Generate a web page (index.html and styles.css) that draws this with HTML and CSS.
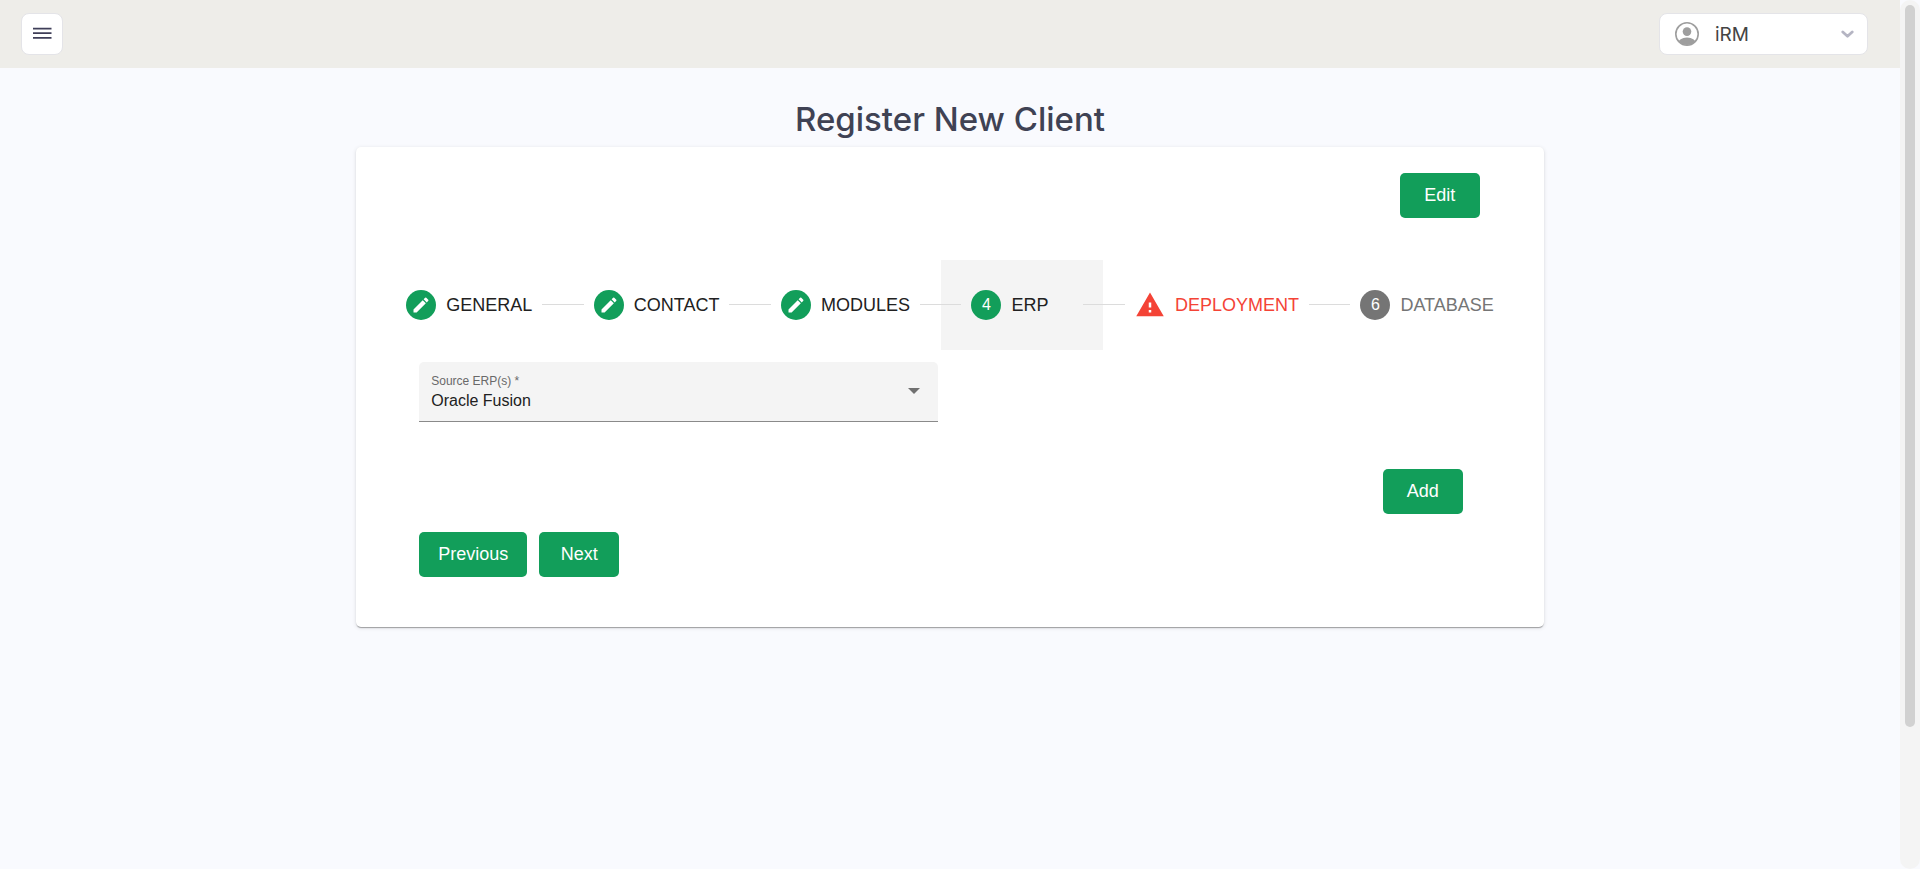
FILE: index.html
```html
<!DOCTYPE html>
<html lang="en">
<head>
<meta charset="utf-8">
<meta name="viewport" content="width=device-width, initial-scale=1">
<title>Register New Client</title>
<link rel="stylesheet" href="styles.css">
</head>
<body>
<div class="page">
  <header class="topbar">
    <button class="menu-btn" type="button" aria-label="Menu">
      <svg width="19" height="14" viewBox="0 0 19 14" fill="none" stroke="#3f3e58" stroke-width="1.7"><path d="M0 1.6h18.5M0 6.2h18.5M0 10.9h18.5"/></svg>
    </button>
    <button class="user-btn" type="button">
      <svg width="24" height="24" viewBox="0 0 24 24"><defs><clipPath id="face"><circle cx="12" cy="12" r="11"/></clipPath></defs><circle cx="12" cy="12" r="11.2" fill="none" stroke="#9e9e9e" stroke-width="1.6"/><circle cx="12" cy="9.6" r="4.3" fill="#9e9e9e"/><ellipse cx="12" cy="22" rx="9.5" ry="6.4" fill="#9e9e9e" clip-path="url(#face)"/></svg>
      <span class="user-name">iRM</span>
      <svg width="13" height="8" viewBox="0 0 13 8" fill="none" stroke="#b5b5c3" stroke-width="2.8" stroke-linecap="round" stroke-linejoin="round"><path d="M1.8 2L6.5 6.2L11.2 2"/></svg>
    </button>
  </header>
  <main class="main">
    <h1 class="title">Register New Client</h1>
    <section class="card">
      <div class="card-actions"><button class="btn" type="button">Edit</button></div>
      <nav class="stepper" aria-label="Steps">
        <button class="step" type="button"><span class="dot"><svg width="20" height="20" viewBox="0 0 24 24" fill="#fff"><path d="M3 17.25V21h3.75L17.81 9.94l-3.75-3.75L3 17.25zM20.71 7.04a1 1 0 0 0 0-1.41l-2.34-2.34a1 1 0 0 0-1.41 0l-1.83 1.83 3.75 3.75 1.83-1.83z"/></svg></span><span class="step-label">GENERAL</span></button>
        <span class="line"></span>
        <button class="step" type="button"><span class="dot"><svg width="20" height="20" viewBox="0 0 24 24" fill="#fff"><path d="M3 17.25V21h3.75L17.81 9.94l-3.75-3.75L3 17.25zM20.71 7.04a1 1 0 0 0 0-1.41l-2.34-2.34a1 1 0 0 0-1.41 0l-1.83 1.83 3.75 3.75 1.83-1.83z"/></svg></span><span class="step-label">CONTACT</span></button>
        <span class="line"></span>
        <button class="step" type="button"><span class="dot"><svg width="20" height="20" viewBox="0 0 24 24" fill="#fff"><path d="M3 17.25V21h3.75L17.81 9.94l-3.75-3.75L3 17.25zM20.71 7.04a1 1 0 0 0 0-1.41l-2.34-2.34a1 1 0 0 0-1.41 0l-1.83 1.83 3.75 3.75 1.83-1.83z"/></svg></span><span class="step-label">MODULES</span></button>
        <span class="line"></span>
        <button class="step step-current" type="button" aria-current="step"><span class="dot">4</span><span class="step-label">ERP</span></button>
        <span class="line"></span>
        <button class="step step-error" type="button"><svg class="warn" width="30" height="30" viewBox="0 0 24 24" fill="#f44336"><path d="M1 21h22L12 2 1 21zm12-3h-2v-2h2v2zm0-4h-2v-4h2v4z"/></svg><span class="step-label">DEPLOYMENT</span></button>
        <span class="line"></span>
        <button class="step step-pending" type="button"><span class="dot">6</span><span class="step-label">DATABASE</span></button>
      </nav>
      <form class="form">
        <div class="fields">
          <div class="field">
            <select class="field-select" id="erp"><option>Oracle Fusion</option></select>
            <label class="field-label" for="erp">Source ERP(s) *</label>
            <svg class="field-arrow" width="12" height="6" viewBox="0 0 12 6" fill="#707070"><path d="M0 0h12L6 6z"/></svg>
          </div>
        </div>
        <div class="add-row"><button class="btn" type="button">Add</button></div>
        <div class="nav-row"><button class="btn" type="button">Previous</button><button class="btn" type="button">Next</button></div>
      </form>
    </section>
  </main>
</div>
<div class="scrollbar"><div class="thumb"></div></div>
</body>
</html>
```
FILE: styles.css
```css
* { box-sizing: border-box; }

body {
  margin: 0;
  display: flex;
  min-height: 100vh;
  background: #f9fafe;
  font-family: "Liberation Sans", Arial, sans-serif;
  color: #212121;
}

button { font: inherit; color: inherit; border: 0; cursor: pointer; }

.page { flex: 1; min-width: 0; }

.topbar {
  display: flex;
  justify-content: space-between;
  align-items: center;
  height: 68px;
  padding: 0 32px 0 21px;
  background: #eeede9;
}

.menu-btn,
.user-btn {
  display: flex;
  align-items: center;
  height: 42px;
  background: #fff;
  border: 1px solid #e4e4e8;
  border-radius: 8px;
}

.menu-btn { width: 42px; justify-content: center; padding: 0; }

.user-btn { width: 209px; padding: 0 13px 0 15px; }

.user-name {
  flex: 1;
  padding-left: 16px;
  text-align: left;
  font-family: Inter, sans-serif;
  font-size: 19px;
  font-weight: 400;
  color: #444;
}

.title {
  margin: 0;
  padding: 26px 0 2px;
  line-height: 51px;
  text-align: center;
  font-family: Inter, sans-serif;
  font-size: 33px;
  font-weight: 500;
  color: #3f4254;
}

.card {
  width: 62.5%;
  margin: 0 auto;
  padding: 26px 20px 50px;
  background: #fff;
  border-radius: 5px;
  box-shadow: 0 2px 1px -1px rgba(0, 0, 0, .2), 0 1px 1px rgba(0, 0, 0, .14), 0 1px 4px rgba(0, 0, 0, .12);
}

.card-actions { display: flex; justify-content: flex-end; padding: 0 44px 42px 0; }

.btn {
  min-width: 80px;
  height: 45px;
  padding: 0 19px;
  border-radius: 5px;
  background: #129e5a;
  color: #fff;
  font-size: 18px;
}

.stepper { display: flex; align-items: center; }

.step {
  display: flex;
  align-items: center;
  gap: 10px;
  height: 90px;
  padding: 0 30px;
  background: none;
  font-size: 18px;
}

.step-current { background: #f4f4f4; }
.step-error { color: #f44336; }
.step-pending { color: #757575; }

.step-label { min-width: 62px; text-align: left; }

.dot {
  display: flex;
  align-items: center;
  justify-content: center;
  width: 30px;
  height: 30px;
  border-radius: 50%;
  background: #129e5a;
  color: #fff;
  font-size: 16px;
}

.step-pending .dot { background: #757575; }

.line { flex: 1; height: 1px; margin: 0 -20px 1px; background: #dcdcdc; z-index: 1; }

.form { padding: 12px 61px 0 43px; }

.fields { display: grid; grid-template-columns: 1fr 1fr; gap: 6px; }

.field { display: grid; align-items: center; }
.field > * { grid-area: 1 / 1; }

.field-select {
  appearance: none;
  width: 100%;
  height: 60px;
  padding: 18px 32px 0 12px;
  border: 0;
  border-bottom: 1px solid #8a8a8a;
  border-radius: 5px 5px 0 0;
  background: #f4f4f4;
  color: #212121;
  font: 16px "Liberation Sans", Arial, sans-serif;
}

.field-label {
  align-self: start;
  justify-self: start;
  padding: 11px 12px 0;
  font-size: 12px;
  line-height: 16px;
  color: #696969;
}

.field-arrow { justify-self: end; margin: 0 18px 2px 0; pointer-events: none; }

.add-row { display: flex; justify-content: flex-end; padding: 47px 0 18px; }

.nav-row { display: flex; gap: 12px; }

.scrollbar {
  width: 20px;
  padding: 5px;
  border-radius: 10px;
  background: #f4f4f4;
}

.thumb { height: 84%; border-radius: 5px; background: #d1d1d1; }
```
